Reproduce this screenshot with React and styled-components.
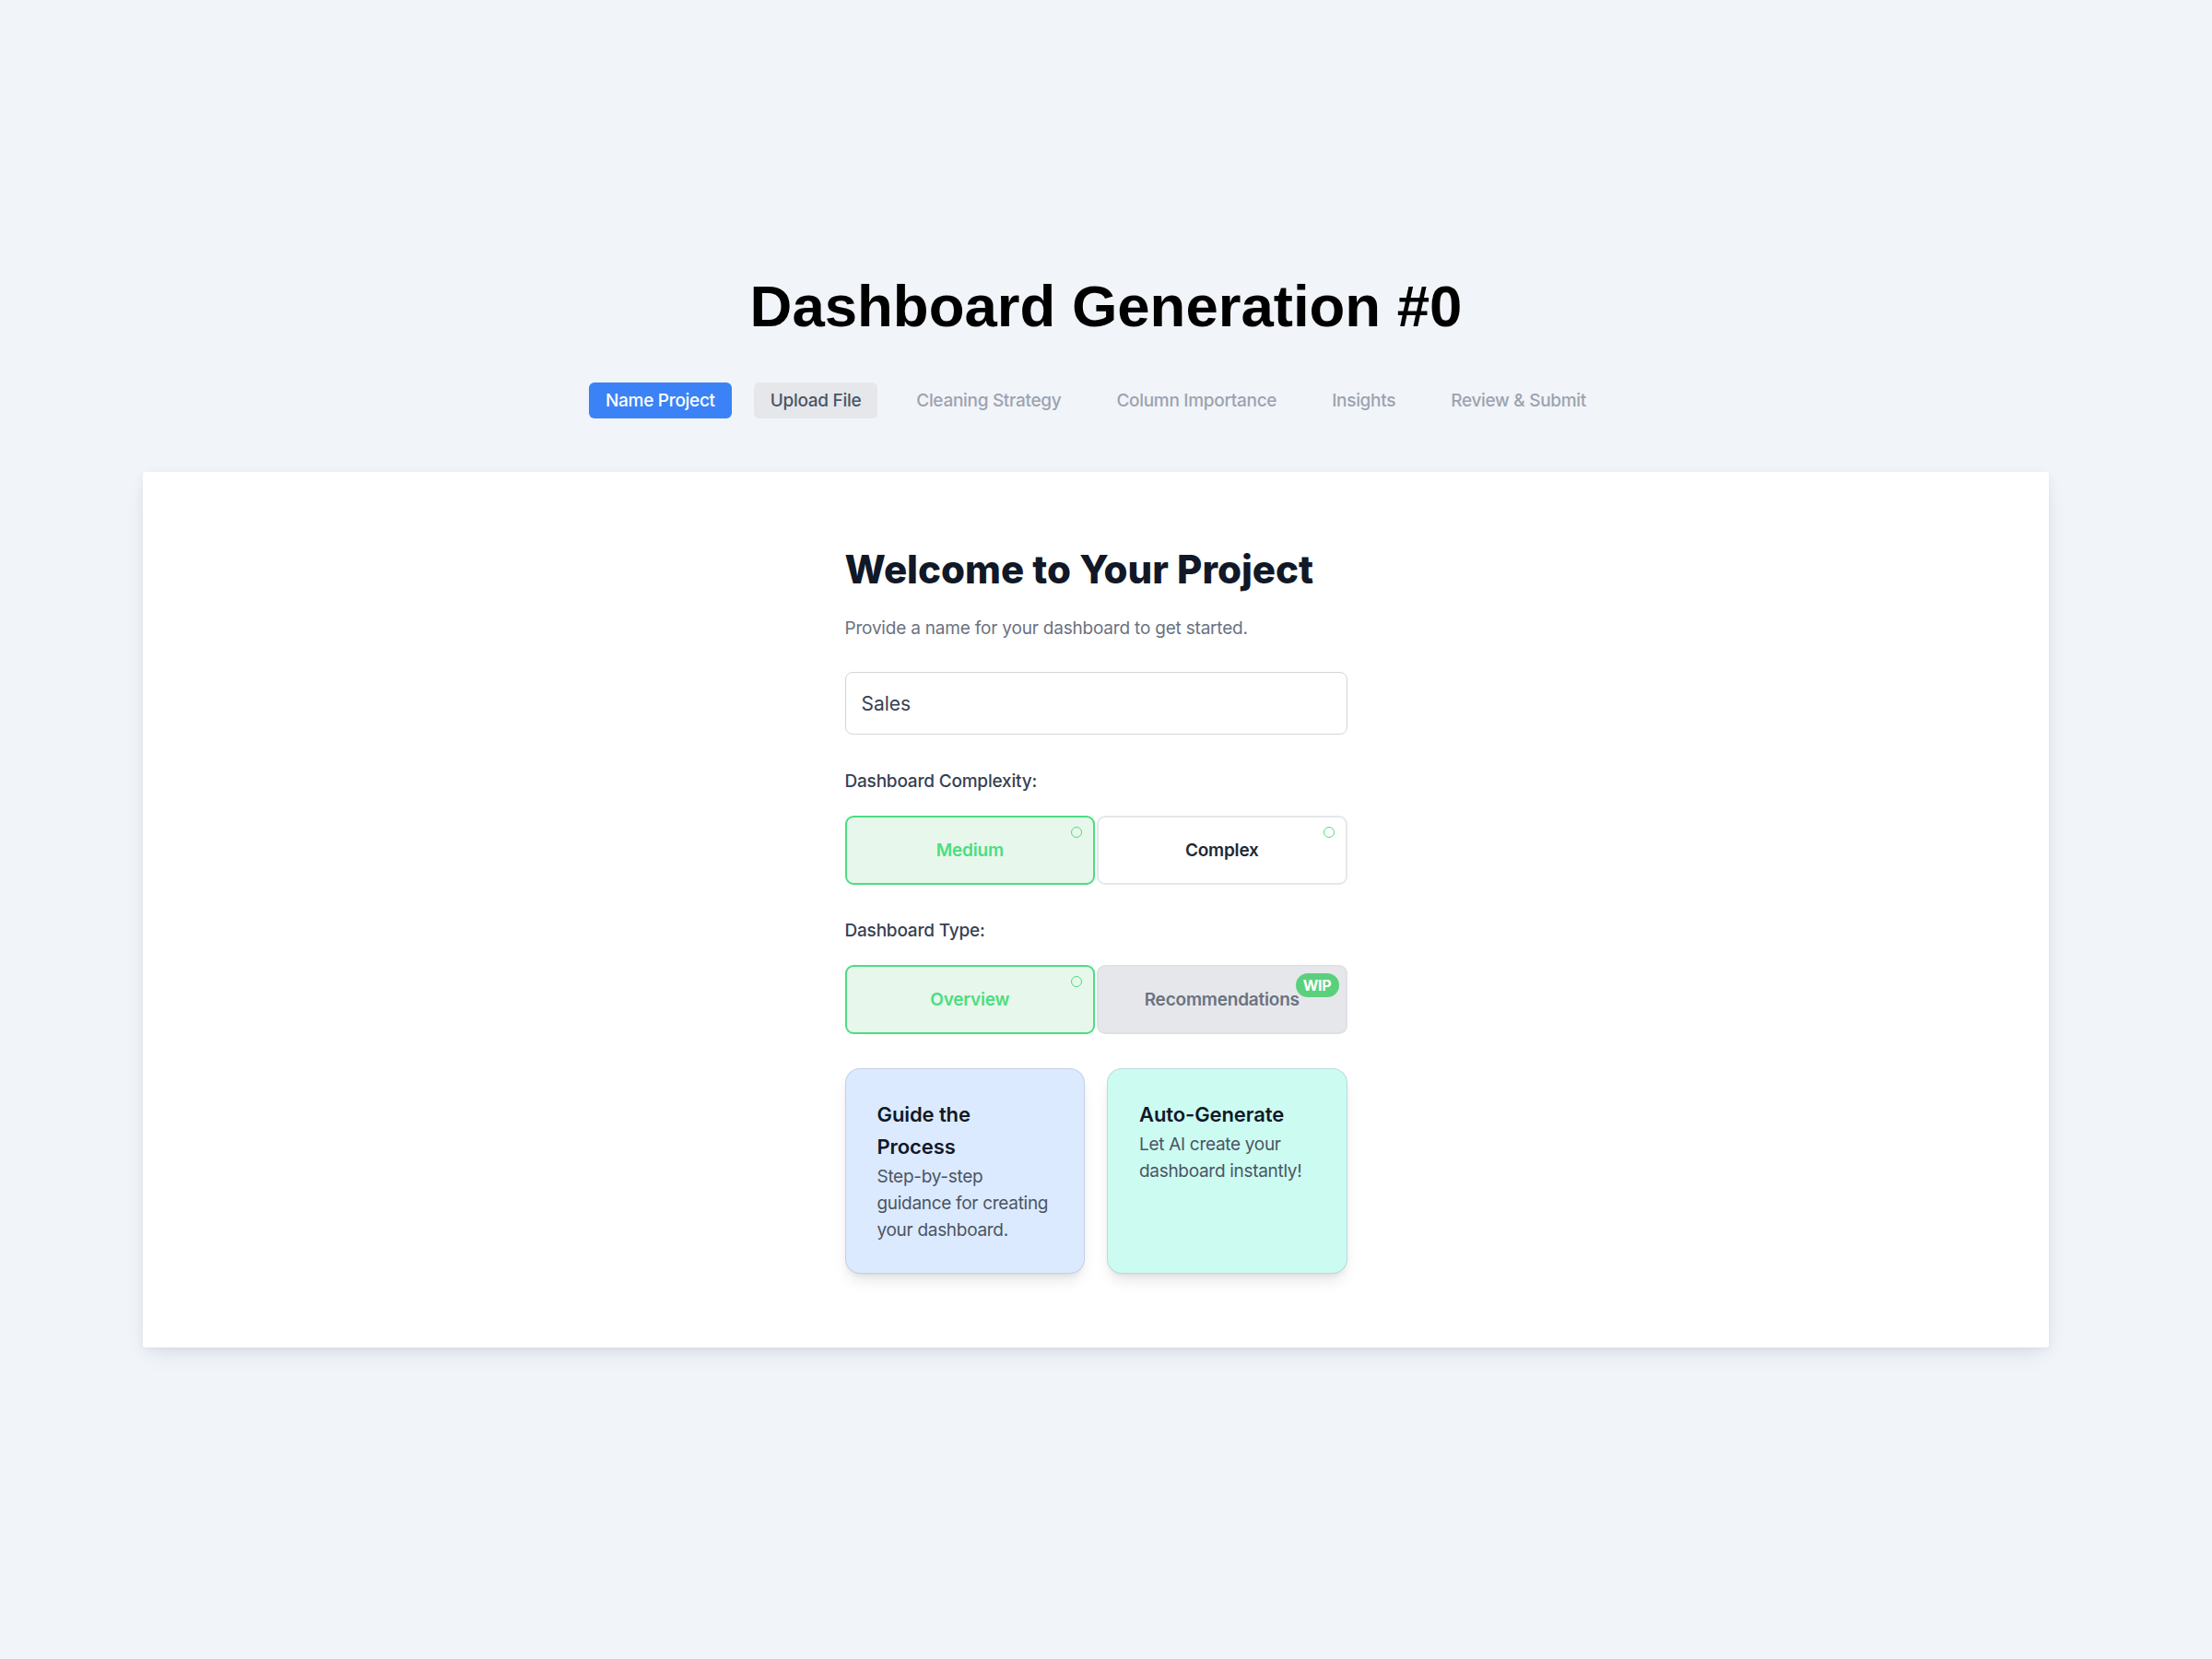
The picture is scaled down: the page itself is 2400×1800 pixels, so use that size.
import React, { useState } from "react";
import styled, { createGlobalStyle, css } from "styled-components";

const GlobalStyle = createGlobalStyle`
  html, body {
    margin: 0;
    padding: 0;
    background: #f1f4f9;
  }
  body {
    font-family: Inter, "Noto Sans", "Liberation Sans", sans-serif;
    -webkit-font-smoothing: antialiased;
  }
  * { box-sizing: border-box; }
`;

const green = "#4ade80";

const Page = styled.div`
  min-height: 1800px;
  padding-top: 295px;
`;

const PageTitle = styled.h1`
  margin: 0;
  text-align: center;
  font-family: "Liberation Sans", Arial, sans-serif;
  font-weight: 700;
  font-size: 63.5px;
  line-height: 74px;
  color: #000;
`;

const Shell = styled.div`
  padding: 0 177px 0 155px;
`;

const Steps = styled.nav`
  display: flex;
  justify-content: center;
  gap: 24px;
  margin-top: 46px;
`;

const Step = styled.button`
  border: none;
  border-radius: 6px;
  padding: 8px 18px;
  font-family: Inter, sans-serif;
  font-size: 19px;
  font-weight: 500;
  line-height: 23px;
  letter-spacing: -0.3px;
  cursor: pointer;
  background: transparent;
  color: #9ca3af;
  ${({ $state }) =>
    $state === "active" &&
    css`
      background: #3b82f6;
      color: #fff;
    `}
  ${({ $state }) =>
    $state === "done" &&
    css`
      background: #e5e7eb;
      color: #4b5563;
    `}
`;

const Panel = styled.section`
  margin-top: 58px;
  background: #fff;
  border-radius: 3px;
  box-shadow: 0 10px 24px -6px rgba(15, 23, 42, 0.1),
    0 2px 10px rgba(15, 23, 42, 0.05);
  padding: 82px 0 80px;
`;

const Form = styled.div`
  width: 545px;
  margin: 0 auto;
`;

const Heading = styled.h2`
  margin: 0;
  font-size: 42px;
  line-height: 48px;
  font-weight: 800;
  letter-spacing: 0;
  color: #111827;
`;

const Lead = styled.p`
  margin: 26px 0 0;
  font-size: 19px;
  line-height: 28px;
  color: #6b7280;
  letter-spacing: -0.2px;
`;

const NameInput = styled.input`
  display: block;
  width: 100%;
  height: 68px;
  margin-top: 33px;
  padding: 0 17px;
  border: 1px solid #d1d5db;
  border-radius: 8px;
  font-family: Inter, sans-serif;
  font-size: 21px;
  color: #374151;
  background: #fff;
  outline: none;
`;

const FieldLabel = styled.div`
  margin-top: ${({ $gap }) => $gap}px;
  font-size: 19px;
  line-height: 28px;
  font-weight: 500;
  color: #374151;
  letter-spacing: -0.2px;
`;

const Choices = styled.div`
  display: grid;
  grid-template-columns: 1fr 1fr;
  gap: 2px;
  margin-top: 23px;
`;

const Choice = styled.button`
  position: relative;
  height: 75px;
  border-radius: 9px;
  border: 2px solid #e5e7eb;
  background: #fff;
  font-family: Inter, sans-serif;
  font-size: 19px;
  font-weight: 600;
  letter-spacing: -0.2px;
  color: #1f2937;
  cursor: pointer;
  ${({ $selected }) =>
    $selected &&
    css`
      border-color: ${green};
      background: #e8f7eb;
      color: ${green};
    `}
  ${({ $disabled }) =>
    $disabled &&
    css`
      background: #e5e7eb;
      border-color: #dfe1e5;
      color: #6b7280;
      cursor: not-allowed;
    `}
`;

const Dot = styled.span`
  position: absolute;
  top: 10px;
  right: 12px;
  width: 12px;
  height: 12px;
  border-radius: 50%;
  border: 1.5px solid ${green};
`;

const Badge = styled.span`
  position: absolute;
  top: 7px;
  right: 7px;
  padding: 0 8px;
  height: 26px;
  line-height: 26px;
  border-radius: 13px;
  background: #5bd07c;
  color: #fff;
  font-size: 16px;
  font-weight: 700;
`;

const Modes = styled.div`
  display: grid;
  grid-template-columns: 1fr 1fr;
  gap: 24px;
  margin-top: 37px;
`;

const Mode = styled.div`
  border-radius: 16px;
  border: 1px solid rgba(148, 163, 184, 0.35);
  padding: 32px 28px 32px 34px;
  background: ${({ $tone }) => $tone};
  box-shadow: 0 10px 15px -3px rgba(0, 0, 0, 0.1),
    0 4px 6px -4px rgba(0, 0, 0, 0.1);
  cursor: pointer;
`;

const ModeTitle = styled.h3`
  margin: 0;
  max-width: 176px;
  font-size: 22px;
  line-height: 35px;
  font-weight: 600;
  letter-spacing: -0.1px;
  color: #111827;
`;

const ModeText = styled.p`
  margin: 0;
  font-size: 19px;
  line-height: 29px;
  letter-spacing: -0.3px;
  color: #4b5563;
`;

const steps = [
  { label: "Name Project", state: "active" },
  { label: "Upload File", state: "done" },
  { label: "Cleaning Strategy" },
  { label: "Column Importance" },
  { label: "Insights" },
  { label: "Review & Submit" },
];

export default function App() {
  const [name, setName] = useState("Sales");
  const [complexity, setComplexity] = useState("medium");

  return (
    <>
      <GlobalStyle />
      <Page>
        <PageTitle>Dashboard Generation #0</PageTitle>
        <Shell>
          <Steps>
            {steps.map((s) => (
              <Step key={s.label} $state={s.state}>
                {s.label}
              </Step>
            ))}
          </Steps>
          <Panel>
            <Form>
              <Heading>Welcome to Your Project</Heading>
              <Lead>Provide a name for your dashboard to get started.</Lead>
              <NameInput value={name} onChange={(e) => setName(e.target.value)} />

              <FieldLabel $gap={37}>Dashboard Complexity:</FieldLabel>
              <Choices>
                <Choice
                  $selected={complexity === "medium"}
                  onClick={() => setComplexity("medium")}
                >
                  Medium
                  <Dot />
                </Choice>
                <Choice
                  $selected={complexity === "complex"}
                  onClick={() => setComplexity("complex")}
                >
                  Complex
                  <Dot />
                </Choice>
              </Choices>

              <FieldLabel $gap={36}>Dashboard Type:</FieldLabel>
              <Choices>
                <Choice $selected>
                  Overview
                  <Dot />
                </Choice>
                <Choice $disabled>
                  Recommendations
                  <Badge>WIP</Badge>
                </Choice>
              </Choices>

              <Modes>
                <Mode $tone="#dbeafe">
                  <ModeTitle>Guide the Process</ModeTitle>
                  <ModeText>Step-by-step guidance for creating your dashboard.</ModeText>
                </Mode>
                <Mode $tone="#ccfbf1">
                  <ModeTitle>Auto-Generate</ModeTitle>
                  <ModeText>Let AI create your dashboard instantly!</ModeText>
                </Mode>
              </Modes>
            </Form>
          </Panel>
        </Shell>
      </Page>
    </>
  );
}
